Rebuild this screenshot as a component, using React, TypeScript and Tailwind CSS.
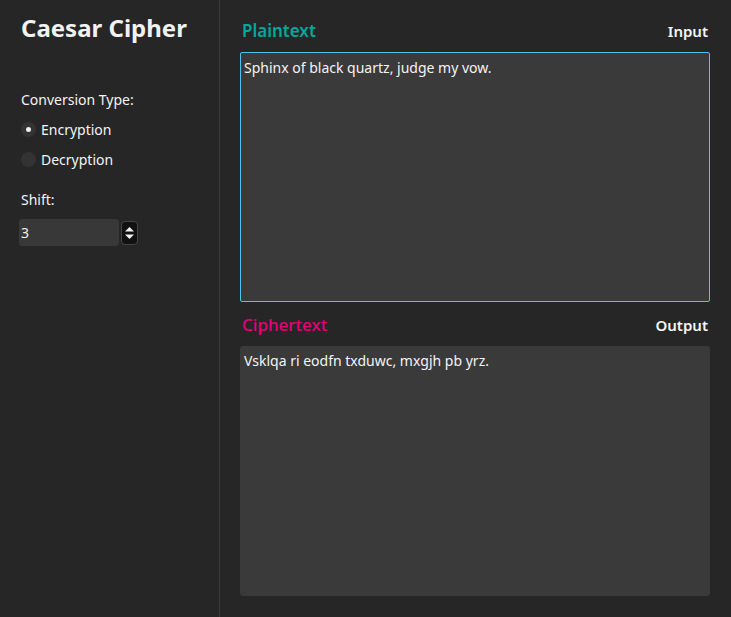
import { useState } from "react";

const shiftText = (text: string, shift: number) =>
  text.replace(/[a-z]/gi, (ch) => {
    const base = ch <= "Z" ? 65 : 97;
    return String.fromCharCode(((ch.charCodeAt(0) - base + shift + 26) % 26) + base);
  });

export default function App() {
  const [mode, setMode] = useState<"enc" | "dec">("enc");
  const [shift, setShift] = useState(3);
  const [input, setInput] = useState("Sphinx of black quartz, judge my vow.");
  const output = shiftText(input, mode === "enc" ? shift : -shift);

  return (
    <div
      className="flex h-[617px] w-full bg-[#262626] text-[14px] text-[#f4f4f4]"
      style={{ fontFamily: '"Noto Sans", "Open Sans", sans-serif' }}
    >
      <aside className="flex w-[220px] shrink-0 flex-col border-r border-[#3a3a3a] pl-[21px] pt-[12px]">
        <h1 className="text-[24px] font-bold leading-[32px] text-[#f2f2f2]">Caesar Cipher</h1>

        <p className="mt-[46px] leading-[20px]">Conversion Type:</p>
        <div className="mt-[9px] flex flex-col gap-[10px]">
          {[
            { id: "enc", label: "Encryption" },
            { id: "dec", label: "Decryption" },
          ].map((opt) => (
            <label key={opt.id} className="flex h-[20px] items-center gap-[5px]">
              <span
                className="flex h-[15px] w-[15px] items-center justify-center rounded-full bg-[#333333]"
                onClick={() => setMode(opt.id as "enc" | "dec")}
              >
                {mode === opt.id && <span className="h-[5px] w-[5px] rounded-full bg-[#f0f0f0]" />}
              </span>
              {opt.label}
            </label>
          ))}
        </div>

        <p className="mt-[21px] leading-[20px]">Shift:</p>
        <div className="-ml-[2px] mt-[9px] flex items-center gap-[2px]">
          <input
            value={shift}
            onChange={(e) => setShift(Number(e.target.value) || 0)}
            className="h-[27px] w-[100px] rounded-[3px] bg-[#383838] px-[2px] text-[#f0f0f0] outline-none"
          />
          <div className="flex h-[24px] w-[17px] flex-col items-center justify-center gap-[2px] rounded-[4px] border border-[#444] bg-[#111]">
            <svg width="11" height="6" viewBox="0 0 11 6">
              <path d="M1 5.5 L5.5 1 L10 5.5 Z" fill="#f0f0f0" />
            </svg>
            <svg width="11" height="6" viewBox="0 0 11 6">
              <path d="M1 0.5 L5.5 5 L10 0.5 Z" fill="#f0f0f0" />
            </svg>
          </div>
        </div>
      </aside>

      <main className="flex flex-1 flex-col pb-[21px] pl-[20px] pr-[21px] pt-[19px]">
        <div className="flex items-center justify-between px-[2px] pb-[9px]">
          <h2 className="text-[17px] font-semibold leading-[24px] text-[#00a89e]">Plaintext</h2>
          <span className="text-[15px] font-semibold leading-[20px]">Input</span>
        </div>
        <textarea
          value={input}
          onChange={(e) => setInput(e.target.value)}
          className="h-[250px] w-full resize-none rounded-[2px] border border-[#4cc2f0] bg-[#3a3a3a] px-[3px] py-[5px] leading-[20px] text-[#f4f4f4] outline-none"
        />

        <div className="flex items-center justify-between px-[2px] pb-[9px] pt-[11px]">
          <h2 className="text-[17px] font-medium leading-[24px] text-[#e6007a]">Ciphertext</h2>
          <span className="text-[15px] font-semibold leading-[20px]">Output</span>
        </div>
        <div className="flex-1 rounded-[3px] bg-[#3a3a3a] px-[4px] py-[5px] leading-[20px]">{output}</div>
      </main>
    </div>
  );
}
